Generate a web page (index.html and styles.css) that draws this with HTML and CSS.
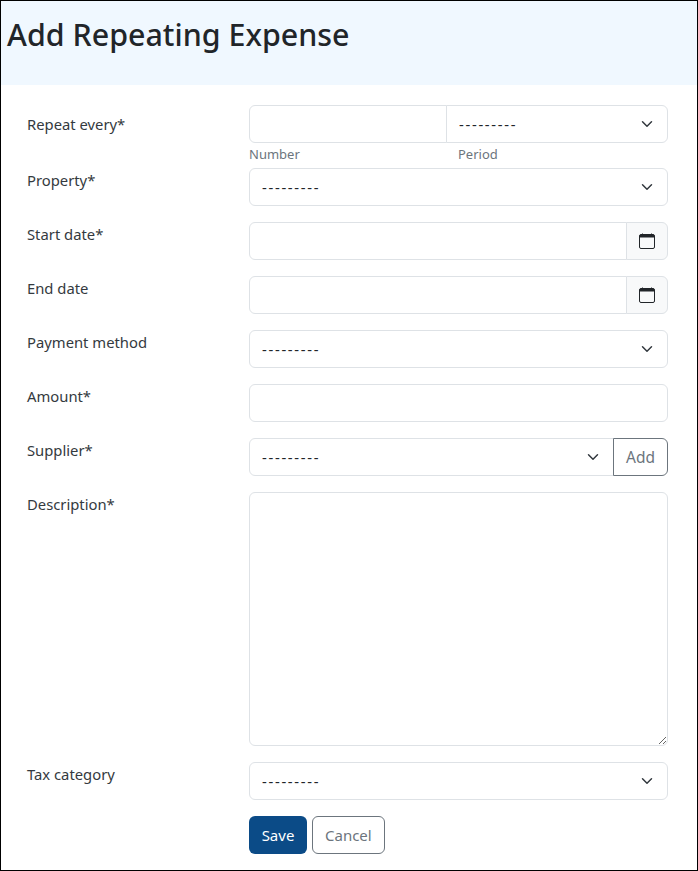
FILE: index.html
```html
<!DOCTYPE html>
<html lang="en">
<head>
    <meta charset="UTF-8">
    <meta name="viewport" content="width=device-width, initial-scale=1.0">
    <title>Add Repeating Expense</title>
    <link rel="stylesheet" href="styles.css">
</head>
<body>

    <header class="page-header">
        <h1>Add Repeating Expense</h1>
    </header>

    <form class="expense-form">
        <div class="form-row form-row-split">
            <label class="form-label">Repeat every*</label>
            <div class="form-field">
                <div class="input-group">
                    <input type="text" class="form-control repeat-number">
                    <select class="form-select repeat-period"><option>---------</option></select>
                </div>
                <div class="help-row">
                    <small class="help-number">Number</small>
                    <small class="help-period">Period</small>
                </div>
            </div>
        </div>

        <div class="form-row">
            <label class="form-label">Property*</label>
            <div class="form-field">
                <select class="form-select"><option>---------</option></select>
            </div>
        </div>

        <div class="form-row">
            <label class="form-label">Start date*</label>
            <div class="form-field">
                <div class="input-group">
                    <input type="text" class="form-control">
                    <span class="calendar-btn">
                        <svg width="16" height="16" viewBox="0 0 16 16"><rect x="0.5" y="1.5" width="15" height="14" rx="1.5" fill="none" stroke="#212529"/><path d="M0.5 3a1.5 1.5 0 0 1 1.5-1.5h12a1.5 1.5 0 0 1 1.5 1.5v1.5h-15z" fill="#212529"/><path d="M3.5 0.5v1M12.5 0.5v1" stroke="#212529"/></svg>
                    </span>
                </div>
            </div>
        </div>

        <div class="form-row">
            <label class="form-label">End date</label>
            <div class="form-field">
                <div class="input-group">
                    <input type="text" class="form-control">
                    <span class="calendar-btn">
                        <svg width="16" height="16" viewBox="0 0 16 16"><rect x="0.5" y="1.5" width="15" height="14" rx="1.5" fill="none" stroke="#212529"/><path d="M0.5 3a1.5 1.5 0 0 1 1.5-1.5h12a1.5 1.5 0 0 1 1.5 1.5v1.5h-15z" fill="#212529"/><path d="M3.5 0.5v1M12.5 0.5v1" stroke="#212529"/></svg>
                    </span>
                </div>
            </div>
        </div>

        <div class="form-row">
            <label class="form-label">Payment method</label>
            <div class="form-field">
                <select class="form-select"><option>---------</option></select>
            </div>
        </div>

        <div class="form-row">
            <label class="form-label">Amount*</label>
            <div class="form-field">
                <input type="text" class="form-control">
            </div>
        </div>

        <div class="form-row">
            <label class="form-label">Supplier*</label>
            <div class="form-field">
                <div class="input-group">
                    <select class="form-select"><option>---------</option></select>
                    <button type="button" class="btn btn-outline btn-add">Add</button>
                </div>
            </div>
        </div>

        <div class="form-row">
            <label class="form-label">Description*</label>
            <div class="form-field">
                <textarea class="form-control description"></textarea>
            </div>
        </div>

        <div class="form-row">
            <label class="form-label">Tax category</label>
            <div class="form-field">
                <select class="form-select"><option>---------</option></select>
            </div>
        </div>

        <div class="form-actions">
            <button type="button" class="btn btn-primary">Save</button>
            <button type="button" class="btn btn-outline">Cancel</button>
        </div>
    </form>

</body>
</html>
```

FILE: styles.css
```css
* {
    box-sizing: border-box;
}

html, body {
    height: 100%;
}

body {
    margin: 0;
    border: 1px solid #000;
    background-color: #fff;
    color: #212529;
    font-family: "Noto Sans", Arial, sans-serif;
    font-size: 14.8px;
    line-height: 24px;
    overflow: hidden;
}

.page-header {
    height: 84px;
    padding: 14px 6px 0;
    background-color: #f0f8ff;
}

.page-header h1 {
    margin: 0;
    font-size: 30.4px;
    font-weight: 500;
    line-height: 40px;
}

.expense-form {
    padding: 20px 29px 0 26px;
}

.form-row {
    display: flex;
    margin-bottom: 16px;
}

.form-row-split {
    margin-bottom: 3px;
}

.form-row-split .form-label {
    padding-top: 7px;
}

.form-label {
    flex: 0 0 222px;
    color: #343a40;
}

.form-field {
    flex: 1;
    min-width: 0;
}

.form-control, .form-select {
    display: block;
    width: 100%;
    height: 38px;
    margin: 0;
    padding: 6px 12px;
    border: 1px solid #dee2e6;
    border-radius: 6px;
    background-color: #fff;
    color: #212529;
    font: inherit;
}

.form-select {
    padding-right: 36px;
    letter-spacing: 1.7px;
    appearance: none;
    background-image: url("data:image/svg+xml,%3csvg xmlns='http://www.w3.org/2000/svg' viewBox='0 0 16 16'%3e%3cpath fill='none' stroke='%23343a40' stroke-linecap='round' stroke-linejoin='round' stroke-width='2' d='m2 5 6 6 6-6'/%3e%3c/svg%3e");
    background-repeat: no-repeat;
    background-position: right 13px center;
    background-size: 14px 12px;
}

.description {
    height: 254px;
    resize: vertical;
}

.input-group {
    display: flex;
}

.input-group .form-control, .input-group .form-select {
    flex: 1;
    min-width: 0;
}

.input-group > :not(:last-child) {
    border-top-right-radius: 0;
    border-bottom-right-radius: 0;
}

.input-group > :not(:first-child) {
    margin-left: -1px;
    border-top-left-radius: 0;
    border-bottom-left-radius: 0;
}

.input-group .repeat-number {
    flex: 0 0 198px;
}

.calendar-btn {
    display: flex;
    flex: 0 0 42px;
    align-items: center;
    justify-content: center;
    height: 38px;
    border: 1px solid #dee2e6;
    border-radius: 6px;
    background-color: #f8f9fa;
}

.help-row {
    display: flex;
    height: 20px;
    margin-top: 2px;
    color: #6c757d;
    font-size: 13px;
    line-height: 18px;
}

.help-number {
    flex: 0 0 209px;
    font-size: inherit;
}

.help-period {
    font-size: inherit;
}

.btn {
    height: 38px;
    padding: 6px 12px;
    border: 1px solid transparent;
    border-radius: 6px;
    font-family: inherit;
    font-size: 15px;
}

.btn-primary {
    width: 58px;
    padding: 6px 0;
    background-color: #0b4b87;
    color: #fff;
}

.btn-outline {
    border-color: #6c757d;
    background-color: #fff;
    color: #6c757d;
}

.btn-add {
    flex: 0 0 55px;
    padding: 6px 0;
    font-size: 15.5px;
    text-align: center;
}

.form-actions {
    display: flex;
    gap: 5px;
    padding-left: 222px;
}
```
